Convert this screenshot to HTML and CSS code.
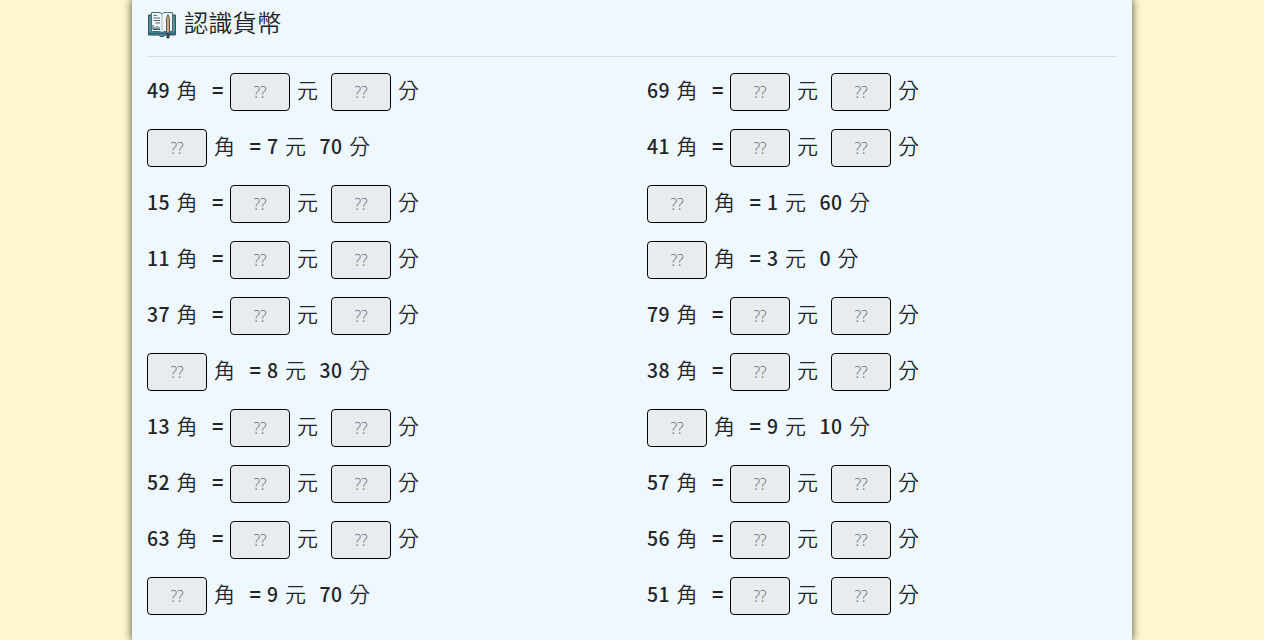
FILE: index.html
```html
<!DOCTYPE html>
<html lang="zh-Hant">
<head>
<meta charset="utf-8">
<title>認識貨幣</title>
<link rel="stylesheet" href="styles.css">
</head>
<body>
<main class="sheet">
<header class="head">
<svg class="book" viewBox="0 0 28 28" aria-hidden="true">
<path d="M.6 4h26.8v20H17l-1.5 1.5h-3L11 24H.6z" fill="#55919d" stroke="#29485b"/>
<path d="M1 21.5h26v2H1z" fill="#34687a"/>
<path d="M3.5 1.5H12l2 1.5 2-1.5h8.5v19H16l-2 1.5-2-1.5H3.5z" fill="#f0f4fa" stroke="#496c7d"/>
<path d="M14 3v18" stroke="#9fb6c3"/>
<path d="M5.5 4.5H9M5.5 7H12M5.5 9.5H12M7.5 12H12" stroke="#526978" stroke-width="1"/>
<path d="M5 14v4.5h7M7 18v-2M9 18v-3M11 18v-2" stroke="#29485b" fill="none" stroke-width="1"/>
<path d="M18.5 7L20 3.5 21.5 7v15h-3z" fill="#cda76e" stroke="#29485b" stroke-width=".8"/>
<path d="M18.5 22h3v4.5L20 28l-1.5-1.5z" fill="#344553"/>
</svg>
<h1 class="title">認識貨幣</h1>
</header>
<section class="questions">
<div class="q"><b class="num">49</b><span class="unit">角</span><b class="eq">=</b><input class="box" placeholder="??" disabled><span class="unit yuan">元</span><input class="box second" placeholder="??" disabled><span class="unit">分</span></div>
<div class="q"><b class="num">69</b><span class="unit">角</span><b class="eq">=</b><input class="box" placeholder="??" disabled><span class="unit yuan">元</span><input class="box second" placeholder="??" disabled><span class="unit">分</span></div>
<div class="q"><input class="box first" placeholder="??" disabled><span class="unit">角</span><b class="eq">=</b><b class="num">7</b><span class="unit">元</span><b class="num fen">70</b><span class="unit">分</span></div>
<div class="q"><b class="num">41</b><span class="unit">角</span><b class="eq">=</b><input class="box" placeholder="??" disabled><span class="unit yuan">元</span><input class="box second" placeholder="??" disabled><span class="unit">分</span></div>
<div class="q"><b class="num">15</b><span class="unit">角</span><b class="eq">=</b><input class="box" placeholder="??" disabled><span class="unit yuan">元</span><input class="box second" placeholder="??" disabled><span class="unit">分</span></div>
<div class="q"><input class="box first" placeholder="??" disabled><span class="unit">角</span><b class="eq">=</b><b class="num">1</b><span class="unit">元</span><b class="num fen">60</b><span class="unit">分</span></div>
<div class="q"><b class="num">11</b><span class="unit">角</span><b class="eq">=</b><input class="box" placeholder="??" disabled><span class="unit yuan">元</span><input class="box second" placeholder="??" disabled><span class="unit">分</span></div>
<div class="q"><input class="box first" placeholder="??" disabled><span class="unit">角</span><b class="eq">=</b><b class="num">3</b><span class="unit">元</span><b class="num fen">0</b><span class="unit">分</span></div>
<div class="q"><b class="num">37</b><span class="unit">角</span><b class="eq">=</b><input class="box" placeholder="??" disabled><span class="unit yuan">元</span><input class="box second" placeholder="??" disabled><span class="unit">分</span></div>
<div class="q"><b class="num">79</b><span class="unit">角</span><b class="eq">=</b><input class="box" placeholder="??" disabled><span class="unit yuan">元</span><input class="box second" placeholder="??" disabled><span class="unit">分</span></div>
<div class="q"><input class="box first" placeholder="??" disabled><span class="unit">角</span><b class="eq">=</b><b class="num">8</b><span class="unit">元</span><b class="num fen">30</b><span class="unit">分</span></div>
<div class="q"><b class="num">38</b><span class="unit">角</span><b class="eq">=</b><input class="box" placeholder="??" disabled><span class="unit yuan">元</span><input class="box second" placeholder="??" disabled><span class="unit">分</span></div>
<div class="q"><b class="num">13</b><span class="unit">角</span><b class="eq">=</b><input class="box" placeholder="??" disabled><span class="unit yuan">元</span><input class="box second" placeholder="??" disabled><span class="unit">分</span></div>
<div class="q"><input class="box first" placeholder="??" disabled><span class="unit">角</span><b class="eq">=</b><b class="num">9</b><span class="unit">元</span><b class="num fen">10</b><span class="unit">分</span></div>
<div class="q"><b class="num">52</b><span class="unit">角</span><b class="eq">=</b><input class="box" placeholder="??" disabled><span class="unit yuan">元</span><input class="box second" placeholder="??" disabled><span class="unit">分</span></div>
<div class="q"><b class="num">57</b><span class="unit">角</span><b class="eq">=</b><input class="box" placeholder="??" disabled><span class="unit yuan">元</span><input class="box second" placeholder="??" disabled><span class="unit">分</span></div>
<div class="q"><b class="num">63</b><span class="unit">角</span><b class="eq">=</b><input class="box" placeholder="??" disabled><span class="unit yuan">元</span><input class="box second" placeholder="??" disabled><span class="unit">分</span></div>
<div class="q"><b class="num">56</b><span class="unit">角</span><b class="eq">=</b><input class="box" placeholder="??" disabled><span class="unit yuan">元</span><input class="box second" placeholder="??" disabled><span class="unit">分</span></div>
<div class="q"><input class="box first" placeholder="??" disabled><span class="unit">角</span><b class="eq">=</b><b class="num">9</b><span class="unit">元</span><b class="num fen">70</b><span class="unit">分</span></div>
<div class="q"><b class="num">51</b><span class="unit">角</span><b class="eq">=</b><input class="box" placeholder="??" disabled><span class="unit yuan">元</span><input class="box second" placeholder="??" disabled><span class="unit">分</span></div>
</section>
</main>
</body>
</html>
```
FILE: styles.css
```css
* { box-sizing: border-box; }
body {
  margin: 0;
  height: 640px;
  overflow: hidden;
  background: #fff8cf;
  color: #212529;
  font-family: "Noto Sans CJK TC", sans-serif;
}
.sheet {
  width: 1000px;
  height: 640px;
  margin: 0 auto;
  padding: 0 15px;
  background: #f0f8ff;
  box-shadow: 0 0 8px 1px #666655;
}
.head {
  display: flex;
  align-items: center;
  height: 57px;
  padding-bottom: 9px;
  width: 970px;
  border-bottom: 1px solid #d8e0e6;
}
.book { width: 28px; height: 28px; margin: 2px 8px 0 1px; }
.title { margin: 0; padding-bottom: 4px; font-size: 24.3px; font-weight: 350; line-height: 32px; }
.questions {
  display: grid;
  grid-template-columns: 500px 470px;
  grid-auto-rows: 56px;
  padding-top: 16px;
}
.q { display: flex; align-items: flex-start; height: 38px; font-size: 20px; line-height: 33px; }
.num, .eq { font-size: 19.4px; font-weight: 500; letter-spacing: .45px; }
.unit { width: 21px; margin-left: 6.5px; font-size: 21px; font-weight: 350; }
.eq { width: 12px; margin-left: 14.5px; margin-right: 6px; font-weight: 700; }
.eq + .num { margin-left: -.5px; }
.num.fen { margin-left: 13.5px; }
.box {
  width: 60px;
  height: 38px;
  padding: 6px 12px;
  border: 1px solid #000;
  border-radius: 4px;
  background: #e9ecef;
  font: 350 15.5px/24px "Noto Sans", sans-serif;
  text-align: center;
}
.box::placeholder { color: #6c757d; }
.box + .unit { margin-left: 7px; }
.second { margin-left: 13px; }
```
